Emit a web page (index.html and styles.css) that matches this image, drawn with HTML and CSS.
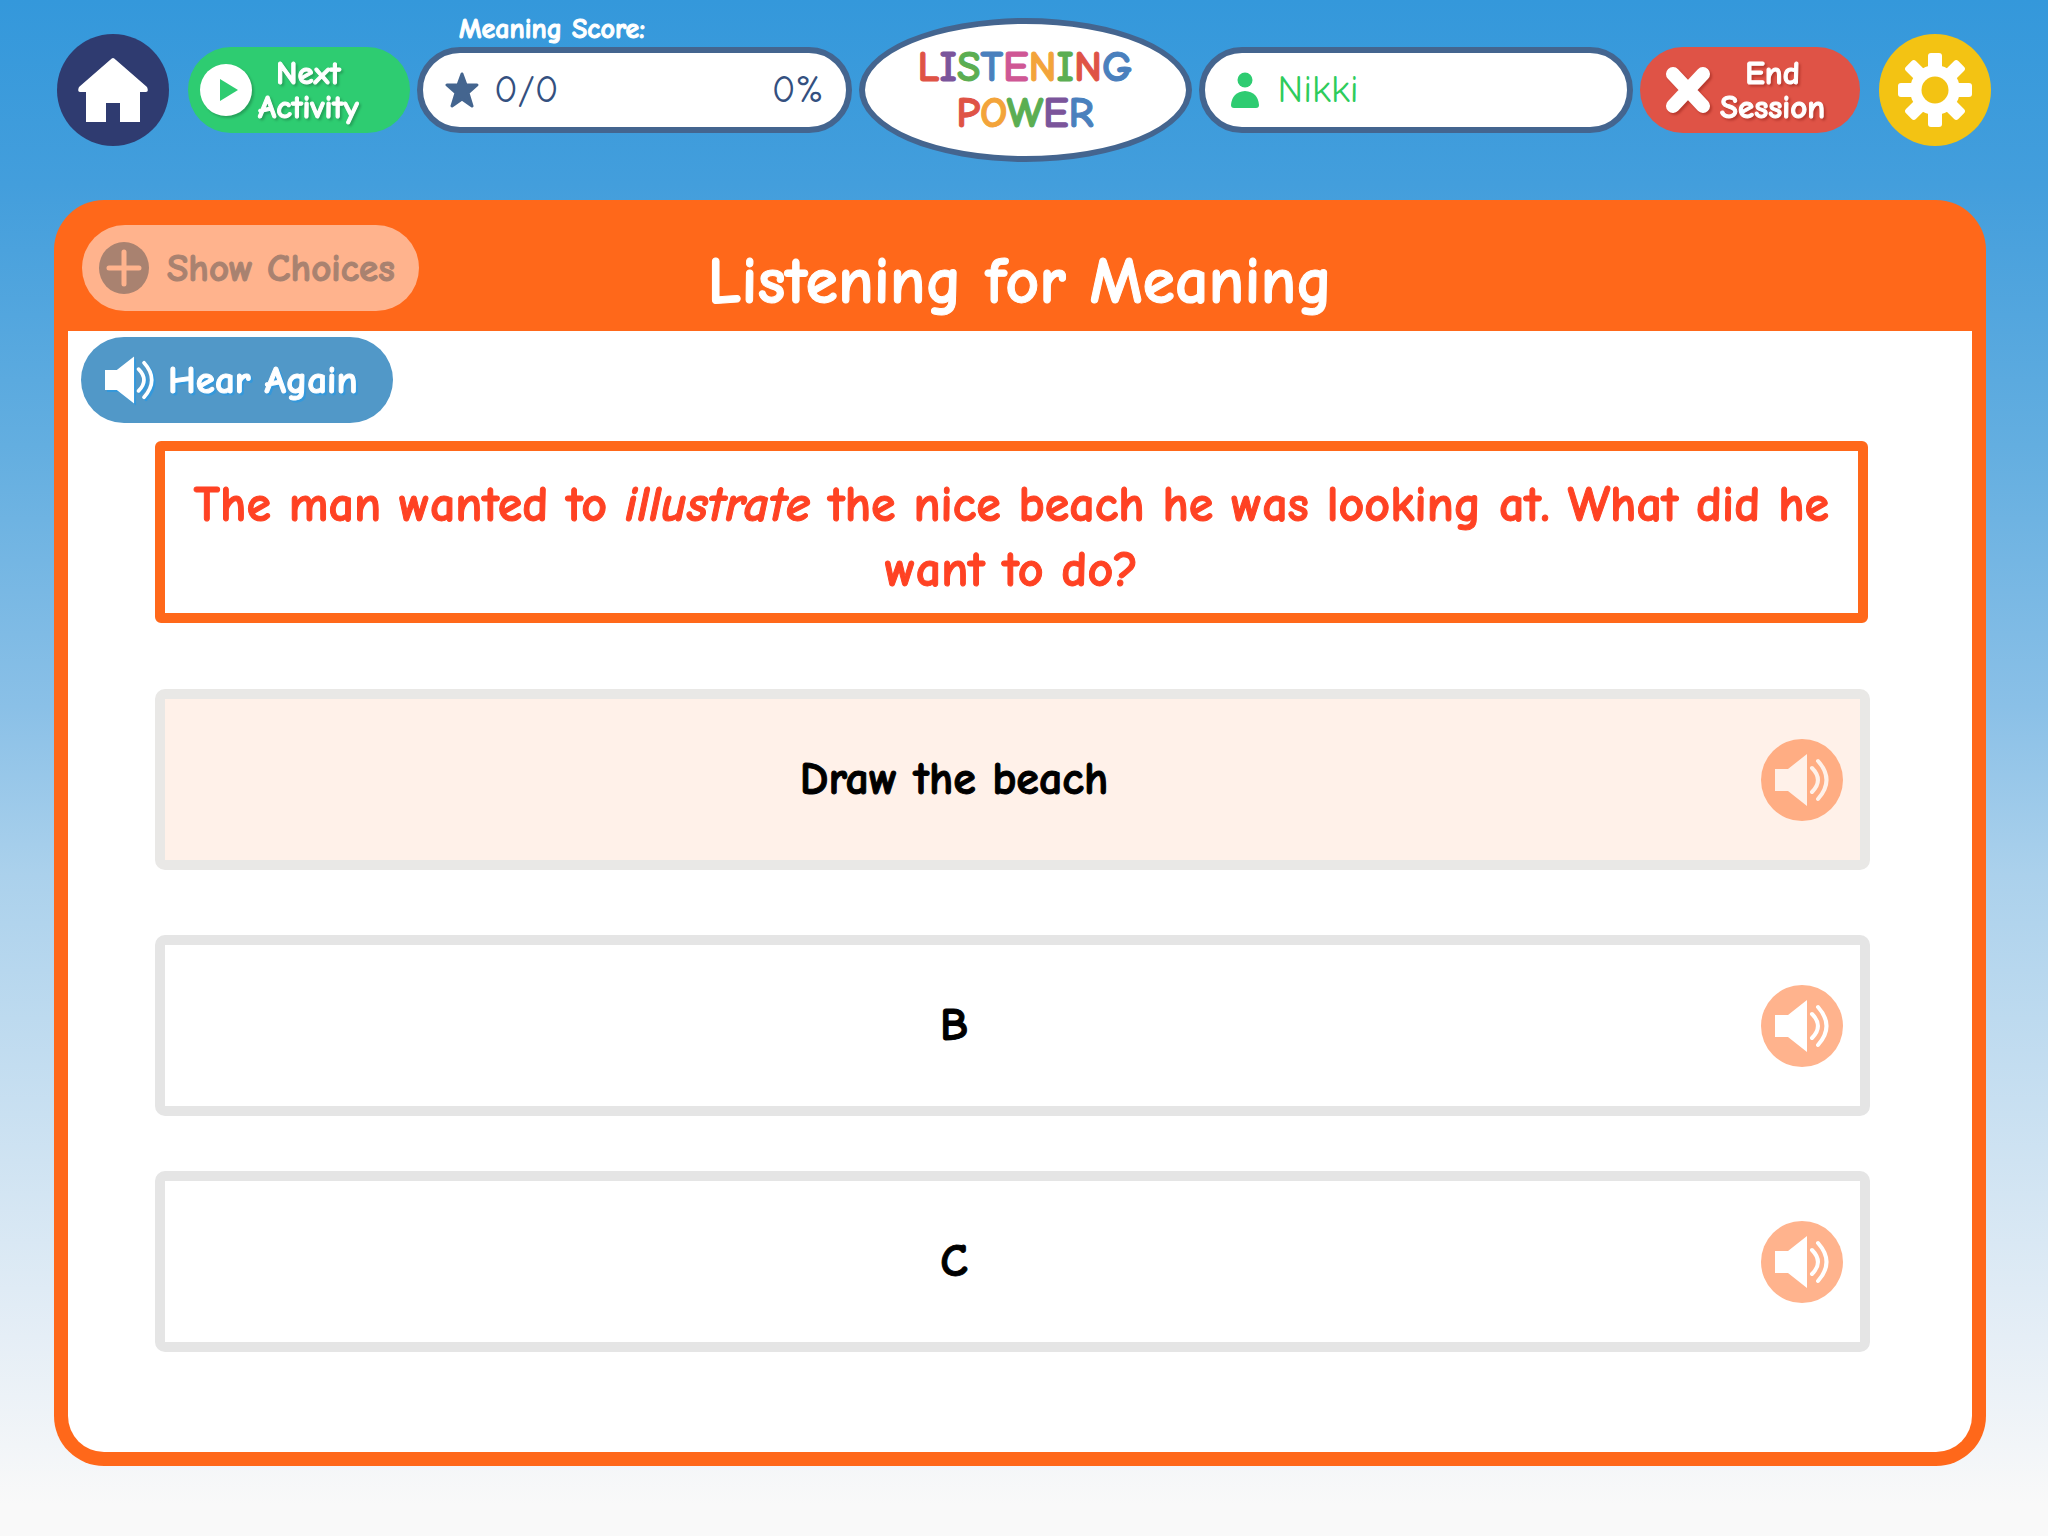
FILE: index.html
```html
<!doctype html>
<html lang="en">
  <head>
    <meta charset="utf-8">
    <meta name="viewport" content="width=device-width, initial-scale=1">
    <title>Listening Power</title>
    <link rel="stylesheet" href="styles.css">
  </head>
  <body>
    <!-- Shared speaker drawing -->
    <svg class="sprite" aria-hidden="true">
      <symbol id="speaker" viewBox="0 0 54 52">
        <path d="M0 15h13L32 0v52L13 37H0z" fill="currentColor"/>
        <path d="M37 14q12 12 0 24M43 7q17 19 0 38" fill="none" stroke="currentColor" stroke-width="4" stroke-linecap="round"/>
      </symbol>
    </svg>

    <header id="app-header">
      <button class="round-button home" aria-label="Home">
        <svg width="70" height="64" viewBox="0 0 70 64">
          <path d="M35 0q1 0 3 2l31 27q2 5-1 5h-6v30H42V45H28v19H8V34H2q-3 0-1-5L32 2q2-2 3-2z" fill="#fff"/>
        </svg>
      </button>

      <div class="toolbar">
        <button class="pill next">
          <svg width="52" height="52" viewBox="0 0 52 52">
            <circle cx="26" cy="26" r="26" fill="#fff"/>
            <path d="M20 15v22l18-11z" fill="#2ecc71"/>
          </svg>
          <span>Next<br>Activity</span>
        </button>

        <div class="score">
          <span class="score-label">Meaning Score:</span>
          <div class="field">
            <svg width="34" height="36" viewBox="0 0 34 36">
              <path d="M17 2l4 11h11l-9 8 4 13-10-7-10 7 4-13-9-8h11z" fill="#44658f" stroke="#44658f" stroke-width="3" stroke-linejoin="round"/>
            </svg>
            <span>0/0</span>
            <span class="percent">0%</span>
          </div>
        </div>

        <h1 class="logo">
          <span><i class="red">L</i><i class="purple">I</i><i class="green">S</i><i class="blue">T</i><i class="pink">E</i><i class="amber">N</i><i class="green">I</i><i class="red">N</i><i class="blue">G</i></span>
          <span><i class="red">P</i><i class="amber">O</i><i class="green">W</i><i class="purple">E</i><i class="blue">R</i></span>
        </h1>

        <div class="field player">
          <svg width="28" height="36" viewBox="0 0 28 36">
            <circle cx="14" cy="8" r="7.5" fill="#2ecc71"/>
            <path d="M0 33q1-13 14-14 13 1 14 14 0 3-3 3H3q-3 0-3-3z" fill="#2ecc71"/>
          </svg>
          <span>Nikki</span>
        </div>

        <button class="pill end">
          <svg width="44" height="46" viewBox="0 0 44 46">
            <path d="M7 7l30 32M37 7L7 39" stroke="#fff" stroke-width="14" stroke-linecap="round"/>
          </svg>
          <span>End<br>Session</span>
        </button>
      </div>

      <button class="round-button settings" aria-label="Settings">
        <svg width="74" height="74" viewBox="-37 -37 74 74">
          <g fill="#fff">
            <rect x="-7" y="-37" width="14" height="74" rx="3"/>
            <rect x="-7" y="-37" width="14" height="74" rx="3" transform="rotate(45)"/>
            <rect x="-7" y="-37" width="14" height="74" rx="3" transform="rotate(90)"/>
            <rect x="-7" y="-37" width="14" height="74" rx="3" transform="rotate(135)"/>
            <circle r="25"/>
          </g>
          <circle r="13.5" fill="#f3c313"/>
        </svg>
      </button>
    </header>

    <main>
      <div class="panel-header">
        <button class="pill show-choices" disabled>
          <svg width="50" height="52" viewBox="0 0 50 52">
            <ellipse cx="25" cy="26" rx="25" ry="26" fill="#a98270"/>
            <path d="M25 10v32M10 26h30" stroke="#ffb38d" stroke-width="5" stroke-linecap="round"/>
          </svg>
          <span>Show Choices</span>
        </button>
        <h2>Listening for Meaning</h2>
      </div>

      <div class="panel-body">
        <button class="pill hear-again">
          <svg width="49" height="48"><use href="#speaker"/></svg>
          <span>Hear Again</span>
        </button>

        <p class="question">The man wanted to <em>illustrate</em> the nice beach he was looking at. What did he want to do?</p>

        <div class="choices">
          <div class="choice selected">
            <button class="answer">Draw the beach</button>
            <button class="listen" aria-label="Hear choice A"><svg width="54" height="52"><use href="#speaker"/></svg></button>
          </div>
          <div class="choice">
            <button class="answer">B</button>
            <button class="listen" aria-label="Hear choice B"><svg width="54" height="52"><use href="#speaker"/></svg></button>
          </div>
          <div class="choice">
            <button class="answer">C</button>
            <button class="listen" aria-label="Hear choice C"><svg width="54" height="52"><use href="#speaker"/></svg></button>
          </div>
        </div>
      </div>
    </main>
  </body>
</html>
```
FILE: styles.css
```css
* {
  box-sizing: border-box;
}

html, body {
  margin: 0;
  min-height: 100%;
}

body {
  display: flex;
  flex-direction: column;
  min-height: 100vh;
  background: linear-gradient(#3498db 0%, #439edc 12%, #63aee0 29%, #8ac0e7 46%, #abd1ec 57%, #e5eef6 87%, #f9f9f9 98%);
  font-family: "Comic Sans MS", "Comic Neue", Lato, sans-serif;
}

button {
  border: 0;
  padding: 0;
  color: inherit;
  font: inherit;
  cursor: pointer;
}

svg {
  flex: none;
}

.sprite {
  position: absolute;
  width: 0;
  height: 0;
}

/* Thicken the bold face a little */
.pill,
.score-label,
.logo,
h2,
.question,
.answer {
  -webkit-text-stroke: 1px currentColor;
}

/* Top bar */
#app-header {
  display: flex;
  align-items: center;
  gap: 19px;
  height: 180px;
  padding: 0 57px;
}

.round-button {
  display: flex;
  flex: none;
  align-items: center;
  justify-content: center;
  width: 112px;
  height: 112px;
  border-radius: 50%;
}

.home {
  background: #2f3b70;
}

.settings {
  background: #f3c313;
}

.toolbar {
  display: grid;
  flex: 1;
  grid-template-columns: 222px 1fr 333px 1fr 220px;
  align-items: center;
  gap: 7px;
  height: 100%;
}

.pill {
  display: flex;
  align-items: center;
  height: 86px;
  border-radius: 43px;
  color: #fff;
  font-size: 39px;
  font-weight: bold;
}

.next,
.end {
  font-size: 33px;
  line-height: 34px;
}

.next {
  gap: 6px;
  padding-left: 12px;
  background: #2ecc71;
}

.end {
  gap: 10px;
  padding-left: 26px;
  background: #df5346;
}

.next svg,
.next span {
  filter: drop-shadow(2px 2px 1px #25a25a);
}

.end svg,
.end span {
  filter: drop-shadow(2px 2px 1px #b83a2f);
}

.score {
  display: grid;
  grid-template-rows: 1fr auto 1fr;
  height: 100%;
}

.score-label {
  align-self: end;
  padding: 0 42px;
  color: #fff;
  font-size: 28px;
  font-weight: bold;
  line-height: 36px;
}

.field {
  display: flex;
  align-items: center;
  gap: 15px;
  height: 86px;
  padding: 0 22px;
  border: 6px solid #44658f;
  border-radius: 43px;
  background: #fff;
  color: #34507f;
  font-size: 39px;
  line-height: 40px;
}

.percent {
  margin-left: auto;
}

.player {
  gap: 19px;
  padding: 0 26px;
  color: #2ecc5c;
}

.logo {
  display: flex;
  flex-direction: column;
  align-items: center;
  justify-content: center;
  height: 144px;
  margin: 0;
  border: 6px solid #44658f;
  border-radius: 50%;
  background: #fff;
  font-size: 43px;
  line-height: 46px;
}

.logo i {
  font-style: normal;
}

.red { color: #df5346; }
.purple { color: #7b559b; }
.green { color: #5bae52; }
.blue { color: #4a80bd; }
.pink { color: #cf5795; }
.amber { color: #f3a43a; }

/* Activity panel */
main {
  display: flex;
  flex: 1;
  flex-direction: column;
  margin: 20px 62px 70px 54px;
  padding: 0 14px 14px;
  border-radius: 50px;
  background: #ff681a;
}

.panel-header {
  display: grid;
  grid-template-columns: 1fr auto 1fr;
  height: 131px;
  padding: 25px 14px 0;
}

.show-choices {
  gap: 18px;
  width: 337px;
  padding-left: 17px;
  background: #ffb38d;
  color: #a98270;
}

.panel-header h2 {
  margin: 0;
  color: #fff;
  font-size: 66px;
  line-height: 114px;
}

.panel-body {
  flex: 1;
  padding: 6px 102px 30px 87px;
  border-radius: 0 0 36px 36px;
  background: #fff;
}

.hear-again {
  gap: 14px;
  width: 312px;
  margin-left: -74px;
  padding-left: 24px;
  background: #5198c8;
}

.hear-again svg,
.hear-again span {
  filter: drop-shadow(2px 2px 0 #3498db);
}

.question {
  margin: 18px 2px 66px 0;
  padding: 22px 14px 10px;
  border: 10px solid #ff681a;
  border-radius: 6px;
  color: #ff4223;
  font-size: 50px;
  font-weight: bold;
  line-height: 65px;
  text-align: center;
}

.choice {
  display: flex;
  align-items: center;
  gap: 18px;
  height: 181px;
  margin-bottom: 55px;
  padding-right: 17px;
  border: 10px solid #e5e5e5;
  border-radius: 10px;
}

.choice.selected {
  margin-bottom: 65px;
  border-color: #e9e8e6;
  background: #fff1e9;
}

.answer {
  flex: 1;
  align-self: stretch;
  background: none;
  color: #000;
  font-size: 46px;
  font-weight: bold;
}

.listen {
  display: flex;
  align-items: center;
  justify-content: center;
  width: 82px;
  height: 82px;
  border-radius: 50%;
  background: #ffb38d;
  color: #fff;
}

.selected .listen {
  background: #ffad83;
  color: #fff1e9;
}
```
